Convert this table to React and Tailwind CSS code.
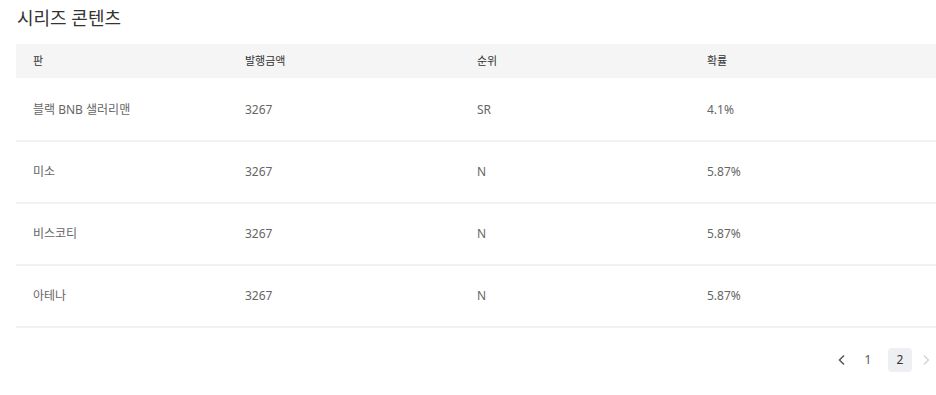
import React from "react";

const rows = [
  ["블랙 BNB 샐러리맨", "3267", "SR", "4.1%"],
  ["미소", "3267", "N", "5.87%"],
  ["비스코티", "3267", "N", "5.87%"],
  ["아테나", "3267", "N", "5.87%"],
];

const font = { fontFamily: '"Noto Sans", "Noto Sans CJK KR", sans-serif' };

export default function App() {
  return (
    <div className="w-[936px] h-[395px] bg-white overflow-hidden" style={font}>
      <div className="pl-4 pt-[4px]">
        <h2 className="text-[18px] leading-[28px] text-[#333] font-normal pl-[1px]">시리즈 콘텐츠</h2>
        <div className="mt-[12px] w-[924px]">
          <div className="grid grid-cols-[212px_232px_230px_1fr] h-[34px] items-center bg-[#f5f5f5] text-[11px] text-[#333]">
            <div className="pl-[17px]">판</div>
            <div className="pl-[17px]">발행금액</div>
            <div className="pl-[17px]">순위</div>
            <div className="pl-[17px]">확률</div>
          </div>
          {rows.map((r, i) => (
            <div key={i} className={`grid grid-cols-[212px_232px_230px_1fr] ${i === 0 ? "h-[64px] pt-[1px]" : "h-[62px]"} items-center border-b-2 border-[#f2f2f2] text-[12px] text-[#666]`}>
              {r.map((c, j) => (
                <div key={j} className="pl-[17px]">{c}</div>
              ))}
            </div>
          ))}
        </div>
        <div className="flex justify-end items-center mt-[20px] text-[12px]">
          <button className="w-[24px] h-[24px] flex items-center justify-center text-[#555]">
            <svg width="10" height="12" viewBox="0 0 10 12" fill="none" stroke="currentColor" strokeWidth="1.5"><path d="M7 1.5 L2.5 6 L7 10.5" /></svg>
          </button>
          <button className="ml-[2px] w-[24px] h-[24px] flex items-center justify-center text-[#555] rounded">1</button>
          <button className="ml-[8px] w-[24px] h-[24px] flex items-center justify-center text-[#333] bg-[#eeeff2] rounded">2</button>
          <button className="ml-[4px] w-[20px] h-[24px] flex items-center justify-center text-[#d0d0d0]">
            <svg width="10" height="12" viewBox="0 0 10 12" fill="none" stroke="currentColor" strokeWidth="1.2"><path d="M3 1.5 L7.5 6 L3 10.5" /></svg>
          </button>
        </div>
      </div>
    </div>
  );
}
